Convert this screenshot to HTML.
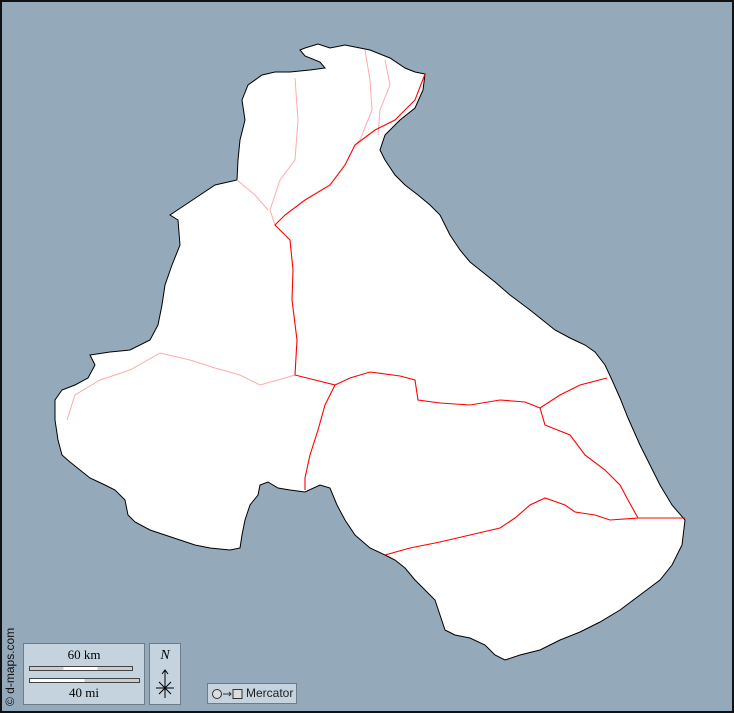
<!DOCTYPE html>
<html><head><meta charset="utf-8"><style>
html,body{margin:0;padding:0;}
body{width:734px;height:713px;overflow:hidden;background:#94aabb;position:relative;font-family:"Liberation Serif",serif;}
.frame{position:absolute;left:0;top:0;width:730px;height:709px;border:2px solid #111;}
.box{position:absolute;background:#c4d3dd;border:1px solid #6c7c88;}
</style></head><body>
<svg width="734" height="713" style="position:absolute;left:0;top:0">
<polygon fill="#fff" stroke="#000" stroke-width="1" points="305,48 318,44 330,48 345,45 370,50 390,58 405,68 415,72 425,74 423,90 415,108 400,120 385,135 380,150 385,160 395,175 405,185 418,195 430,205 440,215 450,235 460,250 470,262 480,270 495,282 510,295 530,310 545,322 555,330 570,338 585,345 595,352 605,365 612,380 620,398 628,418 640,445 650,465 660,485 672,505 685,520 682,545 672,565 660,580 640,595 620,610 600,622 580,632 560,640 540,650 520,655 505,660 495,655 485,645 470,638 455,635 445,630 440,615 435,600 425,590 415,580 405,568 395,560 385,555 370,548 355,535 345,520 337,505 330,488 320,485 305,492 290,490 278,488 268,482 260,485 258,495 250,505 245,520 242,535 240,548 230,550 210,548 195,545 180,540 165,535 150,530 135,522 128,515 125,500 115,490 105,485 90,478 80,470 70,462 62,455 58,440 55,420 55,400 62,390 75,385 88,378 95,365 90,355 110,352 130,350 150,340 158,325 162,305 165,285 172,265 180,245 178,220 170,215 185,205 200,195 215,185 237,180 238,160 240,140 245,120 242,100 248,85 262,75 275,72 290,72 310,70 325,68 320,62 305,56 300,50"/>
<g fill="none" stroke="#ffaaaa" stroke-width="1">
<polyline points="67,420 75,395 100,380 130,370 160,353 190,360 215,368 240,375 260,385 278,380 295,375"/>
<polyline points="295,78 298,120 295,160 280,180 270,210 275,225"/>
<polyline points="237,180 255,195 268,210"/>
<polyline points="365,50 370,80 372,110 360,140 355,145"/>
<polyline points="385,60 390,85 380,110 378,135"/>
</g>
<g fill="none" stroke="#ff0000" stroke-width="1.1">
<polyline points="425,74 415,100 395,120 375,130 355,145 345,165 330,185 305,200 285,215 275,225 290,240 293,270 292,300 297,340 295,375 315,380 335,385 325,405 318,430 310,455 305,478 305,490"/>
<polyline points="335,385 350,378 370,372 400,376 415,380 418,400 440,403 470,405 500,400 525,402 540,408 560,395 580,385 607,378"/>
<polyline points="540,408 545,425 570,435 585,455 605,470 620,485 628,500 638,518 685,518"/>
<polyline points="385,555 410,548 440,542 470,535 500,528 515,518 530,505 545,498 565,505 575,512 595,515 610,520 638,518"/>
</g>
</svg>
<div class="frame"></div>
<div style="position:absolute;left:3px;top:706px;transform:rotate(-90deg);transform-origin:0 0;font:12px 'Liberation Sans',sans-serif;color:#111;white-space:nowrap;">© d-maps.com</div>
<div class="box" style="left:23px;top:643px;width:120px;height:60px;">
<div style="position:absolute;left:0;width:120px;top:3px;text-align:center;font-size:13px;">60 km</div>
<div style="position:absolute;left:5px;top:22px;width:102px;height:3px;border:1px solid #444;background:linear-gradient(90deg,#ccc 33%,#fff 33%,#fff 66%,#ccc 66%);"></div>
<div style="position:absolute;left:5px;top:34px;width:109px;height:3px;border:1px solid #444;background:linear-gradient(90deg,#fff 50%,#ccc 50%);"></div>
<div style="position:absolute;left:0;width:120px;top:41px;text-align:center;font-size:13px;">40 mi</div>
</div>
<div class="box" style="left:149px;top:643px;width:30px;height:60px;">
<div style="position:absolute;left:0;width:30px;top:4px;text-align:center;font-size:14px;font-style:italic;">N</div>
<svg width="30" height="40" style="position:absolute;left:0;top:22px"><g stroke="#000" fill="none" stroke-width="1"><line x1="15" y1="4" x2="15" y2="32"/><polyline points="12,8 15,4 18,8"/><line x1="6" y1="22" x2="24" y2="22"/><line x1="9" y1="16" x2="21" y2="28"/><line x1="21" y1="16" x2="9" y2="28"/></g></svg>
</div>
<div class="box" style="left:207px;top:683px;width:88px;height:19px;font:12px 'Liberation Sans',sans-serif;line-height:19px;color:#222;white-space:nowrap;"><svg width="36" height="19" style="position:absolute;left:2px;top:0"><circle cx="7" cy="10" r="4.5" fill="#ddd" stroke="#333"/><line x1="13" y1="10" x2="21" y2="10" stroke="#333"/><polyline points="19,8 21,10 19,12" fill="none" stroke="#333"/><rect x="23" y="5.5" width="9" height="9" fill="#ddd" stroke="#333"/></svg><span style="position:absolute;left:38px;top:0">Mercator</span></div>
</body></html>
